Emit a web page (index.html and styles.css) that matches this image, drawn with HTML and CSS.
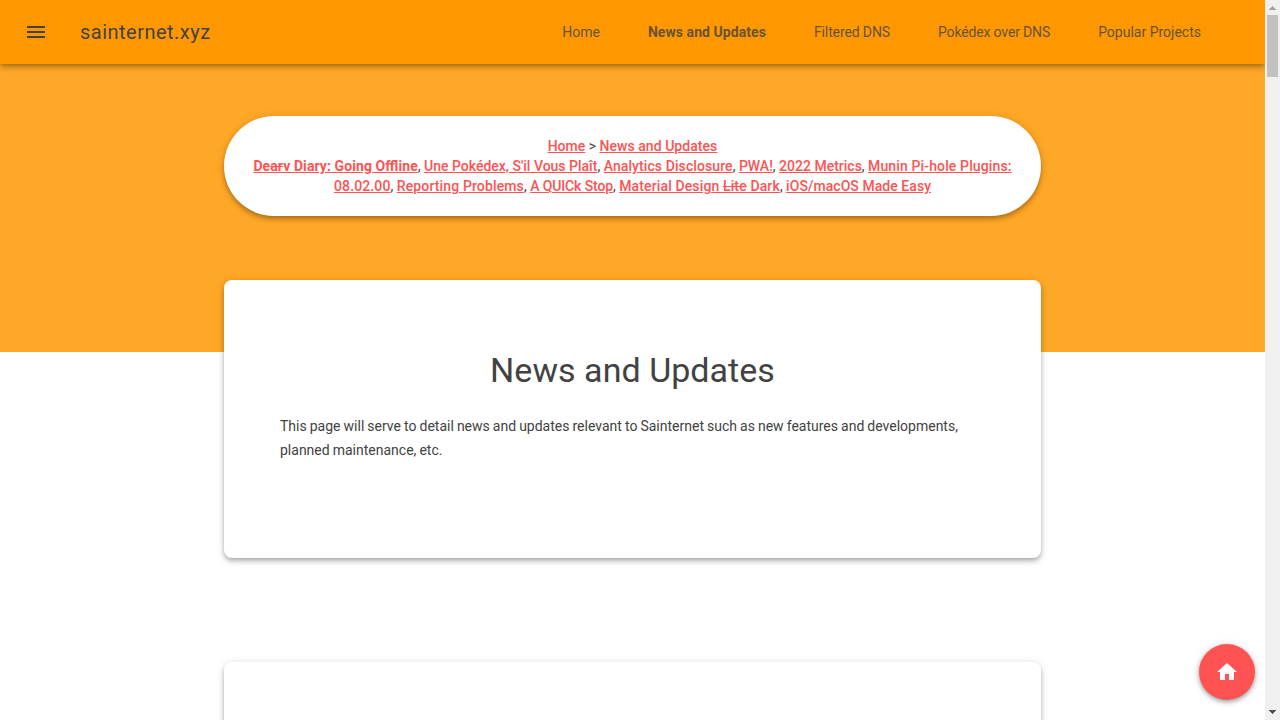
FILE: index.html
```html
<!DOCTYPE html>
<html lang="en">
<head>
<meta charset="utf-8">
<title>News and Updates</title>
<link rel="stylesheet" href="styles.css">
</head>
<body>
<div class="window">
  <div class="layout">
    <header class="header">
      <svg class="menu-icon" viewBox="0 0 24 24"><path d="M3 18h18v-2H3v2zm0-5h18v-2H3v2zm0-7v2h18V6H3z"/></svg>
      <span class="title">sainternet.xyz</span>
      <nav class="nav">
        <a>Home</a>
        <a class="current">News and Updates</a>
        <a class="tight">Filtered DNS</a>
        <a class="tighter">Pokédex over DNS</a>
        <a>Popular Projects</a>
      </nav>
    </header>
    <main class="content">
      <div class="crumbs">
        <a>Home</a> &gt; <a class="airy">News and Updates</a><br>
        <a class="strong loose">De<s>ar</s>v Diary: Going Offline</a>, <a>Une Pokédex, S'il Vous Plaît</a>, <a class="loose">Analytics Disclosure</a>, <a>PWA!</a>, <a>2022 Metrics</a>, <a class="looser">Munin Pi-hole Plugins: 08.02.00</a>, <a class="looser">Reporting Problems</a>, <a class="tight">A QUICk Stop</a>, <a class="looser">Material Design <s>Lite</s> Dark</a>, <a class="airy">iOS/macOS Made Easy</a>
      </div>
      <section class="card intro">
        <h1>News and Updates</h1>
        <p>This page will serve to detail news and updates relevant to Sainternet such as new features and developments, planned maintenance, etc.</p>
      </section>
      <section class="card next"></section>
    </main>
    <a class="fab" aria-label="Home"><svg viewBox="0 0 24 24"><path d="M10 20v-6h4v6h5v-8h3L12 3 2 12h3v8z"/></svg></a>
  </div>
  <div class="scrollbar">
    <svg class="arrow" viewBox="0 0 15 15" shape-rendering="crispEdges"><path fill="#a3a3a3" d="M7 6h1v1h1v1h1v1h1v1H4V9h1V8h1V7h1z"/></svg>
    <div class="thumb"></div>
    <svg class="arrow" viewBox="0 0 15 15" shape-rendering="crispEdges"><path fill="#505050" d="M4 5h7v1h-1v1H9v1H8v1H7V8H6V7H5V6H4z"/></svg>
  </div>
</div>
</body>
</html>
```
FILE: styles.css
```css
* { box-sizing: border-box; }
body {
  margin: 0;
  background: #fff;
  color: #424242;
  font: 14px/20px Roboto, sans-serif;
  font-feature-settings: "liga" 1;
}
.window {
  display: flex;
  height: 720px;
  overflow: hidden;
}
.layout {
  position: relative;
  width: 1265px;
  height: 720px;
  overflow: hidden;
}
.header {
  position: relative;
  z-index: 1;
  display: flex;
  align-items: center;
  height: 64px;
  padding: 0 40px 0 24px;
  background: #ff9800;
  box-shadow: 0 4px 5px 0 rgba(0,0,0,.14), 0 1px 10px 0 rgba(0,0,0,.12), 0 2px 4px -1px rgba(0,0,0,.2);
}
.menu-icon {
  width: 24px;
  height: 24px;
  margin-right: 32px;
  fill: #424242;
}
.title {
  font-size: 20px;
  line-height: 1;
  letter-spacing: .48px;
}
.nav {
  display: flex;
  margin-left: auto;
}
.nav a {
  padding: 0 24px;
  line-height: 64px;
  opacity: .8;
}
.nav .current {
  font-weight: 700;
  letter-spacing: .06px;
}
.tight { letter-spacing: -.12px; }
.tighter { letter-spacing: -.15px; }
.airy { letter-spacing: .05px; }
.loose { letter-spacing: .09px; }
.looser { letter-spacing: .13px; }
.content {
  display: flex;
  flex-direction: column;
  align-items: center;
  height: 656px;
  padding-top: 52px;
  background: linear-gradient(#ffa726 288px, #fff 288px);
}
.crumbs, .card {
  flex: none;
  width: 817px;
  background: #fff;
  box-shadow: 0 4px 5px 0 rgba(0,0,0,.14), 0 1px 10px 0 rgba(0,0,0,.12), 0 2px 4px -1px rgba(0,0,0,.2);
}
.crumbs {
  height: 100px;
  padding: 20px 28px;
  border-radius: 50px;
  text-align: center;
}
.crumbs a {
  color: #ff5252;
  font-weight: 500;
  text-decoration: underline;
}
.crumbs .strong { font-weight: 700; }
.card {
  border-radius: 8px;
  padding: 70px 56px 0;
}
.intro {
  height: 278px;
  margin-top: 64px;
}
.next {
  height: 300px;
  margin-top: 104px;
}
h1 {
  margin: 0 0 24px;
  font-size: 34px;
  line-height: 40px;
  font-weight: 400;
  letter-spacing: .04px;
  text-align: center;
}
p {
  margin: 0;
  line-height: 24px;
  word-spacing: -.42px;
}
.fab {
  position: absolute;
  right: 10px;
  bottom: 20px;
  z-index: 2;
  display: flex;
  align-items: center;
  justify-content: center;
  width: 56px;
  height: 56px;
  border-radius: 50%;
  background: #ff5252;
  box-shadow: 0 2px 4px rgba(0,0,0,.3), 0 1px 8px rgba(0,0,0,.15);
}
.fab svg {
  width: 24px;
  height: 24px;
  fill: #fff;
}
.scrollbar {
  display: flex;
  flex-direction: column;
  justify-content: space-between;
  width: 15px;
  background: #f0f0f0;
}
.arrow {
  display: block;
  width: 15px;
  height: 15px;
}
.thumb {
  width: 11px;
  height: 62px;
  margin: 0 2px auto;
  background: #c1c1c1;
}
```
